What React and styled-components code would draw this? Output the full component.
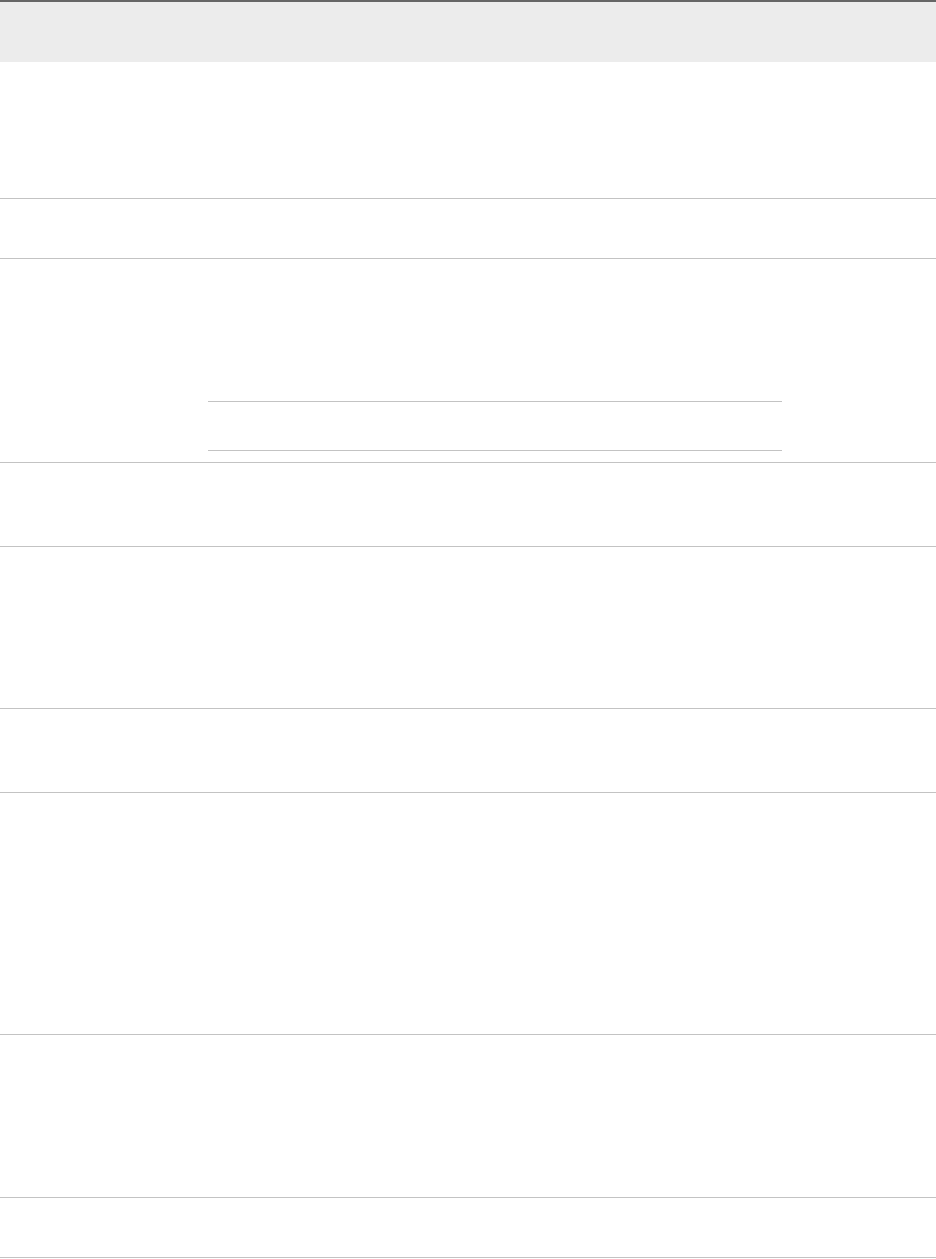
import React from "react";
import styled, { createGlobalStyle } from "styled-components";

const GlobalStyle = createGlobalStyle`
  html, body {
    margin: 0;
    padding: 0;
    background: #ffffff;
    font-family: "Liberation Sans", Arial, sans-serif;
  }
  * { box-sizing: border-box; }
`;

const rows = [137, 60, 204, 84, 162, 84, 242, 163, 60];

export default function App() {
  return (
    <>
      <GlobalStyle />
      <Table>
        <HeaderRow>
          <Cell />
          <Cell />
        </HeaderRow>
        {rows.map((h, i) => (
          <Row key={i} $h={h}>
            <Cell />
            <Cell>
              {i === 2 && (
                <NestedTable>
                  <NestedRow />
                </NestedTable>
              )}
            </Cell>
          </Row>
        ))}
      </Table>
    </>
  );
}

const Table = styled.div`
  width: 936px;
  border-top: 2px solid #666666;
`;

const HeaderRow = styled.div`
  display: grid;
  grid-template-columns: 208px 1fr;
  height: 60px;
  background-color: #ececec;
`;

const Row = styled.div`
  display: grid;
  grid-template-columns: 208px 1fr;
  height: ${(p) => p.$h}px;
  border-bottom: 1px solid #c3c3c3;
`;

const Cell = styled.div`
  display: flex;
  flex-direction: column;
  justify-content: flex-end;
  padding-bottom: 11px;
`;

const NestedTable = styled.div`
  width: 574px;
  border-top: 1px solid #c3c3c3;
`;

const NestedRow = styled.div`
  height: 49px;
  border-bottom: 1px solid #c3c3c3;
`;
